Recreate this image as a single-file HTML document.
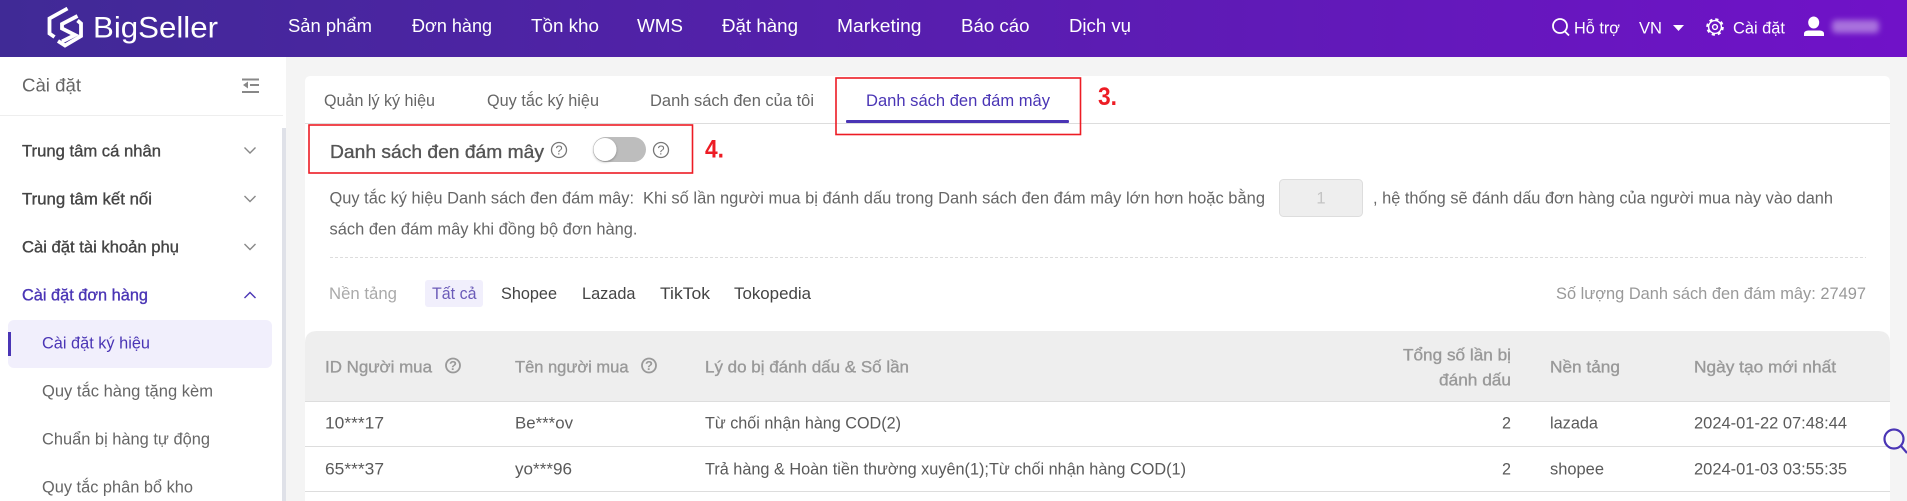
<!DOCTYPE html>
<html lang="vi">
<head>
<meta charset="utf-8">
<title>BigSeller</title>
<style>
html,body{margin:0;padding:0;width:1907px;height:501px;overflow:hidden;background:#f4f4f4}
svg{display:block;position:absolute;left:0;top:0}
text{font-family:"Liberation Sans",Arial,sans-serif;font-size:16.6px;fill:#666;white-space:pre}
.nav{font-size:18px;fill:#fff}
.top{font-size:16.4px;fill:#fff}
.m{stroke:currentColor;stroke-width:.35}
.side{fill:#666}
.head{fill:#444;color:#444}
.pur{fill:#4a35b5;color:#4a35b5}
.tb{fill:#999;color:#999}
.row{fill:#5a5a5a}
.plat{fill:#444}
.red{font-size:25px;font-weight:bold;fill:#ed1c24}
.hq{font-size:13px;fill:#777;text-anchor:middle}
.hq2{font-size:13px;font-weight:bold;fill:#999;text-anchor:middle}
</style>
</head>
<body>
<svg width="1907" height="501" viewBox="0 0 1907 501" xmlns="http://www.w3.org/2000/svg">
<defs>
<linearGradient id="hg" x1="0" y1="0" x2="1" y2="0"><stop offset="0" stop-color="#402a96"/><stop offset="1" stop-color="#7012c8"/></linearGradient>
<filter id="bl" x="-30%" y="-80%" width="160%" height="260%"><feGaussianBlur stdDeviation="3"/></filter>
<filter id="sh" x="-40%" y="-40%" width="180%" height="180%"><feDropShadow dx="0" dy="1" stdDeviation="1.2" flood-color="#000" flood-opacity=".3"/></filter>
</defs>

<!-- header -->
<rect x="0" y="0" width="1907" height="57" fill="url(#hg)"/>
<g fill="none" stroke="#fff" stroke-width="3.800" stroke-linejoin="miter">
<path d="M67.500 8.500L49.500 18.500V33.500L54.500 37"/>
<path d="M77.500 16L62 24V28.500L75 35L62 41.500"/>
<path d="M77.500 20.500L81 23.500V36L65 45.500L58 41"/>
</g>
<text x="93" y="37.500" textLength="125" lengthAdjust="spacingAndGlyphs" style="font-size:30px;fill:#fff">BigSeller</text>

<text class="nav" x="288" y="32" textLength="84" lengthAdjust="spacingAndGlyphs">Sản phẩm</text>
<text class="nav" x="412" y="32" textLength="80" lengthAdjust="spacingAndGlyphs">Đơn hàng</text>
<text class="nav" x="531" y="32" textLength="68" lengthAdjust="spacingAndGlyphs">Tồn kho</text>
<text class="nav" x="637" y="32" textLength="46" lengthAdjust="spacingAndGlyphs">WMS</text>
<text class="nav" x="722" y="32" textLength="76" lengthAdjust="spacingAndGlyphs">Đặt hàng</text>
<text class="nav" x="837" y="32" textLength="84.500" lengthAdjust="spacingAndGlyphs">Marketing</text>
<text class="nav" x="961" y="32" textLength="68.500" lengthAdjust="spacingAndGlyphs">Báo cáo</text>
<text class="nav" x="1069" y="32" textLength="62" lengthAdjust="spacingAndGlyphs">Dịch vụ</text>

<g fill="none" stroke="#fff" stroke-width="1.800"><circle cx="1560" cy="26" r="7"/><path d="M1565 31.500L1569 35.500"/></g>
<text class="top" x="1574" y="33.500" textLength="46" lengthAdjust="spacingAndGlyphs">Hỗ trợ</text>
<text class="top" x="1639" y="33.500" textLength="23" lengthAdjust="spacingAndGlyphs">VN</text>
<path d="M1673 25H1684L1678.500 31Z" fill="#fff"/>
<g fill="none" stroke="#fff">
<circle cx="1715" cy="27" r="6.400" stroke-width="1.400"/>
<circle cx="1715" cy="27" r="7.800" stroke-width="2" stroke-dasharray="3.200 2.930"/>
<circle cx="1715" cy="27" r="2.400" stroke-width="1.400"/>
</g>
<text class="top" x="1733" y="33.500" textLength="52" lengthAdjust="spacingAndGlyphs">Cài đặt</text>
<ellipse cx="1813.700" cy="22.500" rx="5.500" ry="6" fill="#fff"/>
<path d="M1804 36V33.500Q1804 31 1808 30.500H1820Q1824 31 1824 33.500V36Z" fill="#fff"/>
<rect x="1832" y="20" width="47" height="13" rx="4" fill="#fff" opacity=".4" filter="url(#bl)"/>

<!-- sidebar -->
<rect x="0" y="57" width="286" height="444" fill="#fff"/>
<rect x="0" y="115" width="283" height="1" fill="#eee"/>
<rect x="282" y="128" width="4" height="373" fill="#dfe1e8"/>
<text x="22" y="91.500" textLength="59" lengthAdjust="spacingAndGlyphs" style="font-size:18.500px;fill:#666">Cài đặt</text>
<g fill="#888"><rect x="242" y="78.500" width="17" height="2"/><rect x="250" y="84" width="9" height="2"/><rect x="242" y="91" width="17" height="2"/><path d="M248 81.500V88.500L243 85Z"/></g>

<g class="head">
<text class="head m" x="22" y="156.500" textLength="139" lengthAdjust="spacingAndGlyphs">Trung tâm cá nhân</text>
<text class="head m" x="22" y="204.500" textLength="130" lengthAdjust="spacingAndGlyphs">Trung tâm kết nối</text>
<text class="head m" x="22" y="252.500" textLength="157" lengthAdjust="spacingAndGlyphs">Cài đặt tài khoản phụ</text>
<text class="pur m" x="22" y="300.500" textLength="126" lengthAdjust="spacingAndGlyphs">Cài đặt đơn hàng</text>
</g>
<g fill="none" stroke="#888" stroke-width="1.400">
<path d="M244.500 147.500L250 153L255.500 147.500"/>
<path d="M244.500 196L250 201.500L255.500 196"/>
<path d="M244.500 244L250 249.500L255.500 244"/>
<path d="M244.500 298L250 292.500L255.500 298" stroke="#4a35b5"/>
</g>
<rect x="8" y="320" width="264" height="48" rx="6" fill="#f1effc"/>
<rect x="8" y="332" width="3" height="24" fill="#4a35b5"/>
<text class="pur" x="42" y="348.500" textLength="108" lengthAdjust="spacingAndGlyphs">Cài đặt ký hiệu</text>
<text class="side" x="42" y="396.500" textLength="171" lengthAdjust="spacingAndGlyphs">Quy tắc hàng tặng kèm</text>
<text class="side" x="42" y="444.500" textLength="168" lengthAdjust="spacingAndGlyphs">Chuẩn bị hàng tự động</text>
<text class="side" x="42" y="492.500" textLength="151" lengthAdjust="spacingAndGlyphs">Quy tắc phân bổ kho</text>

<!-- card -->
<path d="M305 82Q305 76 311 76H1884Q1890 76 1890 82V501H305Z" fill="#fff"/>
<rect x="305" y="123" width="1585" height="1" fill="#ddd"/>
<text x="324" y="106" textLength="111" lengthAdjust="spacingAndGlyphs">Quản lý ký hiệu</text>
<text x="487" y="106" textLength="112" lengthAdjust="spacingAndGlyphs">Quy tắc ký hiệu</text>
<text x="650" y="106" textLength="164" lengthAdjust="spacingAndGlyphs">Danh sách đen của tôi</text>
<text class="pur" x="866" y="106" textLength="184" lengthAdjust="spacingAndGlyphs">Danh sách đen đám mây</text>
<rect x="846" y="120" width="223" height="3" rx="1" fill="#4a35b5"/>

<rect x="836" y="78" width="244.500" height="56.500" fill="none" stroke="#ed1c24" stroke-width="1.600"/>
<text class="red" x="1098" y="105" textLength="19" lengthAdjust="spacingAndGlyphs">3.</text>
<rect x="309" y="125" width="383.500" height="48" fill="none" stroke="#ed1c24" stroke-width="1.600"/>
<text class="red" x="705" y="157.500" textLength="19" lengthAdjust="spacingAndGlyphs">4.</text>

<text x="330" y="158" textLength="214" lengthAdjust="spacingAndGlyphs" class="m" style="font-size:18px;fill:#555;color:#555">Danh sách đen đám mây</text>
<circle cx="559" cy="150" r="7.500" fill="none" stroke="#777" stroke-width="1.300"/>
<text class="hq" x="559" y="154.500">?</text>
<rect x="593" y="137" width="53" height="25" rx="12.500" fill="#bdbdbd"/>
<circle cx="605" cy="149.500" r="11.500" fill="#fff" filter="url(#sh)"/>
<circle cx="661" cy="150" r="7.500" fill="none" stroke="#777" stroke-width="1.300"/>
<text class="hq" x="661" y="154.500">?</text>

<text x="329.500" y="203.500" textLength="304.500" lengthAdjust="spacingAndGlyphs">Quy tắc ký hiệu Danh sách đen đám mây:</text>
<text x="643" y="203.500" textLength="622" lengthAdjust="spacingAndGlyphs">Khi số lần người mua bị đánh dấu trong Danh sách đen đám mây lớn hơn hoặc bằng</text>
<rect x="1279.500" y="179.500" width="83" height="37" rx="4" fill="#eee" stroke="#ddd"/>
<text x="1321" y="203.500" style="fill:#c4c4c4;text-anchor:middle">1</text>
<text x="1373" y="203.500" textLength="460" lengthAdjust="spacingAndGlyphs">, hệ thống sẽ đánh dấu đơn hàng của người mua này vào danh</text>
<text x="329.500" y="234.500" textLength="308" lengthAdjust="spacingAndGlyphs">sách đen đám mây khi đồng bộ đơn hàng.</text>
<path d="M330 257.500H1866" stroke="#ddd" stroke-dasharray="3 2"/>

<text x="329" y="299" textLength="68" lengthAdjust="spacingAndGlyphs" style="fill:#aaa">Nền tảng</text>
<rect x="425" y="280" width="58" height="27" rx="3" fill="#f1effc"/>
<text class="pur" x="432" y="299" textLength="44.500" lengthAdjust="spacingAndGlyphs" style="fill:#6b5bb8">Tất cả</text>
<text class="plat" x="501" y="299" textLength="56" lengthAdjust="spacingAndGlyphs">Shopee</text>
<text class="plat" x="582" y="299" textLength="53.500" lengthAdjust="spacingAndGlyphs">Lazada</text>
<text class="plat" x="660" y="299" textLength="50" lengthAdjust="spacingAndGlyphs">TikTok</text>
<text class="plat" x="734" y="299" textLength="77" lengthAdjust="spacingAndGlyphs">Tokopedia</text>
<text x="1556" y="299" textLength="310" lengthAdjust="spacingAndGlyphs" style="fill:#999">Số lượng Danh sách đen đám mây: 27497</text>

<!-- table -->
<path d="M305 401V343Q305 331 317 331H1878Q1890 331 1890 343V401Z" fill="#eee"/>
<rect x="305" y="401" width="1585" height="1" fill="#ddd"/>
<rect x="305" y="446" width="1585" height="1" fill="#ddd"/>
<rect x="305" y="491" width="1585" height="1" fill="#ddd"/>

<text class="tb m" x="325" y="372.500" textLength="107" lengthAdjust="spacingAndGlyphs">ID Người mua</text>
<circle cx="453" cy="365.500" r="7" fill="none" stroke="#999" stroke-width="1.800"/>
<text class="hq2" x="453" y="370">?</text>
<text class="tb m" x="515" y="372.500" textLength="113.500" lengthAdjust="spacingAndGlyphs">Tên người mua</text>
<circle cx="649" cy="365.500" r="7" fill="none" stroke="#999" stroke-width="1.800"/>
<text class="hq2" x="649" y="370">?</text>
<text class="tb m" x="705" y="372.500" textLength="204" lengthAdjust="spacingAndGlyphs">Lý do bị đánh dấu &amp; Số lần</text>
<text class="tb m" x="1403" y="360.500" textLength="108" lengthAdjust="spacingAndGlyphs">Tổng số lần bị</text>
<text class="tb m" x="1439" y="385.500" textLength="72" lengthAdjust="spacingAndGlyphs">đánh dấu</text>
<text class="tb m" x="1550" y="372.500" textLength="70" lengthAdjust="spacingAndGlyphs">Nền tảng</text>
<text class="tb m" x="1694" y="372.500" textLength="142" lengthAdjust="spacingAndGlyphs">Ngày tạo mới nhất</text>

<text class="row" x="325" y="428.500" textLength="59" lengthAdjust="spacingAndGlyphs">10***17</text>
<text class="row" x="515" y="428.500" textLength="58" lengthAdjust="spacingAndGlyphs">Be***ov</text>
<text class="row" x="705" y="428.500" textLength="196" lengthAdjust="spacingAndGlyphs">Từ chối nhận hàng COD(2)</text>
<text class="row" x="1502" y="428.500" textLength="9" lengthAdjust="spacingAndGlyphs">2</text>
<text class="row" x="1550" y="428.500" textLength="48" lengthAdjust="spacingAndGlyphs">lazada</text>
<text class="row" x="1694" y="428.500" textLength="153" lengthAdjust="spacingAndGlyphs">2024-01-22 07:48:44</text>

<text class="row" x="325" y="474.500" textLength="59" lengthAdjust="spacingAndGlyphs">65***37</text>
<text class="row" x="515" y="474.500" textLength="57" lengthAdjust="spacingAndGlyphs">yo***96</text>
<text class="row" x="705" y="474.500" textLength="481" lengthAdjust="spacingAndGlyphs">Trả hàng &amp; Hoàn tiền thường xuyên(1);Từ chối nhận hàng COD(1)</text>
<text class="row" x="1502" y="474.500" textLength="9" lengthAdjust="spacingAndGlyphs">2</text>
<text class="row" x="1550" y="474.500" textLength="54" lengthAdjust="spacingAndGlyphs">shopee</text>
<text class="row" x="1694" y="474.500" textLength="153" lengthAdjust="spacingAndGlyphs">2024-01-03 03:55:35</text>

<!-- floating search -->
<g fill="none" stroke="#4a35b5" stroke-width="2.200"><circle cx="1894" cy="439" r="9.500"/><path d="M1901 446L1907 453"/></g>
</svg>
</body>
</html>
